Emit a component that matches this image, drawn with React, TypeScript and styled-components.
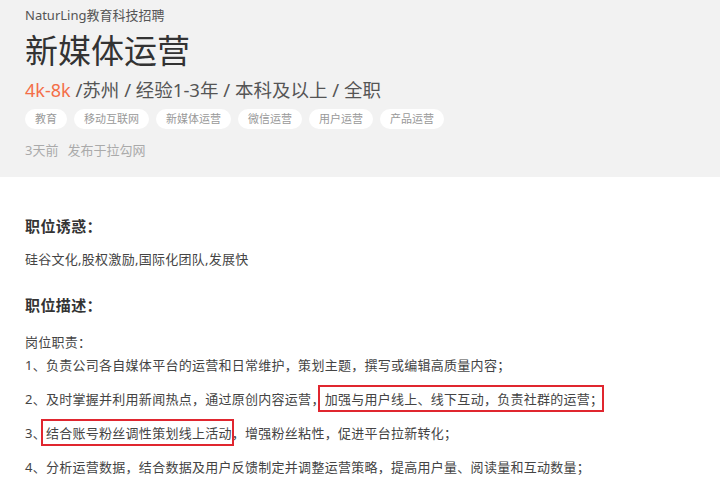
import React from 'react'
import styled, { createGlobalStyle } from 'styled-components'

const GlobalStyle = createGlobalStyle`
  html, body {
    margin: 0;
    padding: 0;
    background: #ffffff;
    font-family: "Noto Sans", "Noto Sans CJK SC", sans-serif;
  }
`

const Header = styled.div`
  height: 177px;
  box-sizing: border-box;
  background: #f2f2f2;
  padding: 6px 25px 0;
`

const Company = styled.div`
  font-size: 13px;
  line-height: 18px;
  color: #555555;
`

const Title = styled.h1`
  margin: 7px 0 0;
  font-size: 33px;
  font-weight: 400;
  line-height: 40px;
  color: #333333;
`

const Meta = styled.div`
  margin-top: 7px;
  font-size: 18.5px;
  line-height: 24px;
  color: #555555;
`

const Salary = styled.span`
  color: #f46e48;
  font-size: 18px;
`

const Tags = styled.ul`
  margin: 7px 0 0;
  padding: 0;
  list-style: none;
  display: flex;
  gap: 7px;
`

const Tag = styled.li`
  height: 20px;
  line-height: 20px;
  padding: 0 10px;
  border-radius: 10px;
  background: #ffffff;
  font-size: 11px;
  color: #999999;
`

const Published = styled.div`
  margin-top: 12px;
  font-size: 13px;
  line-height: 18px;
  color: #aaaaaa;
  display: flex;
  gap: 9px;
`

const Body = styled.div`
  padding: 0 25px;
`

const SectionTitle = styled.h3<{ gap: number }>`
  margin: ${p => p.gap}px 0 0;
  font-size: 15px;
  font-weight: 700;
  line-height: 22px;
  letter-spacing: 0.4px;
  color: #333333;
`

const Text = styled.p<{ gap: number; lh?: number }>`
  margin: ${p => p.gap}px 0 0;
  font-size: 13px;
  line-height: ${p => p.lh ?? 23}px;
  letter-spacing: 0.27px;
  color: #444444;
`

// red annotation frame drawn over the text
const Mark = styled.span<{ left: number; right: number }>`
  position: relative;
  &::after {
    content: '';
    position: absolute;
    top: -5px;
    bottom: -4px;
    left: ${p => p.left}px;
    right: ${p => p.right}px;
    border: 2px solid #e0262f;
    pointer-events: none;
  }
`

const tags = ['教育', '移动互联网', '新媒体运营', '微信运营', '用户运营', '产品运营']

const App: React.FC = () => {
  return (
    <>
      <GlobalStyle />
      <Header>
        <Company>NaturLing教育科技招聘</Company>
        <Title>新媒体运营</Title>
        <Meta>
          <Salary>4k-8k</Salary> /苏州 / 经验1-3年 / 本科及以上 / 全职
        </Meta>
        <Tags>
          {tags.map(t => <Tag key={t}>{t}</Tag>)}
        </Tags>
        <Published>
          <span>3天前</span>
          <span>发布于拉勾网</span>
        </Published>
      </Header>
      <Body>
        <SectionTitle gap={38}>职位诱惑：</SectionTitle>
        <Text gap={12} lh={20}>硅谷文化,股权激励,国际化团队,发展快</Text>
        <SectionTitle gap={25}>职位描述：</SectionTitle>
        <Text gap={15}>
          岗位职责：<br />
          1、负责公司各自媒体平台的运营和日常维护，策划主题，撰写或编辑高质量内容；
        </Text>
        <Text gap={11}>
          2、及时掌握并利用新闻热点，通过原创内容运营，<Mark left={-7} right={-1}>加强与用户线上、线下互动，负责社群的运营；</Mark>
        </Text>
        <Text gap={11}>
          3、<Mark left={-5} right={-2}>结合账号粉丝调性策划线上活动</Mark>，增强粉丝粘性，促进平台拉新转化；
        </Text>
        <Text gap={11}>
          4、分析运营数据，结合数据及用户反馈制定并调整运营策略，提高用户量、阅读量和互动数量；
        </Text>
      </Body>
    </>
  )
}

export default App
